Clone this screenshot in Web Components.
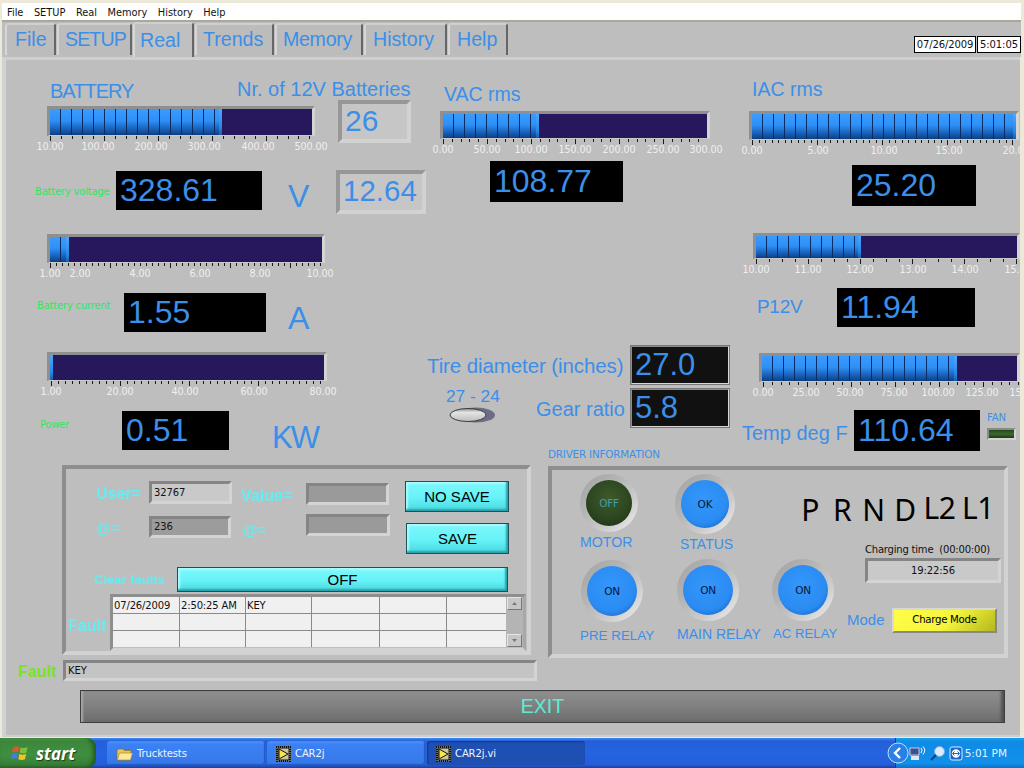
<!DOCTYPE html>
<html><head><meta charset="utf-8">
<style>
html,body{margin:0;padding:0;height:100%;overflow:hidden;background:#ece9d8}
body{font-family:"DejaVu Sans",sans-serif}
</style></head>
<body>
<xp-window>
  <lv-menu><span>File</span><span>SETUP</span><span>Real</span><span>Memory</span><span>History</span><span>Help</span></lv-menu>
  <lv-tabs>
    <lv-tab w="51" pad="8">File</lv-tab><lv-tab w="75" ls="-.9">SETUP</lv-tab><lv-tab w="61" pad="5" active>Real</lv-tab><lv-tab w="79" pad="6">Trends</lv-tab><lv-tab w="88" ls="-.3" pad="6">Memory</lv-tab><lv-tab w="83" pad="7">History</lv-tab><lv-tab w="60" pad="7">Help</lv-tab>
    <lv-clock slot="clock"></lv-clock>
  </lv-tabs>
  <lv-panel>
    <lv-text x="50" y="91" fs="20" ls="-1">BATTERY</lv-text>
    <lv-text x="237" y="89" fs="20">Nr. of 12V Batteries</lv-text>
    <lv-text x="444" y="94" fs="19.5">VAC rms</lv-text>
    <lv-text x="752" y="89" fs="19.5">IAC rms</lv-text>

    <lv-bar x="47" y="106" w="268" h="30" fill="172" seg="11" scale="10.00@50,100.00@98,200.00@151,300.00@204,400.00@258,500.00@311" minor="5"></lv-bar>
    <lv-bar x="440" y="111" w="270" h="28" fill="96" seg="11" scale="0.00@443,50.00@487,100.00@531,150.00@575,200.00@619,250.00@663,300.00@706" minor="5"></lv-bar>
    <lv-bar x="749" y="111" w="270" h="29" fill="264" seg="11" scale="0.00@752,5.00@818,10.00@884,15.00@949,20.00@1016" minor="10" clip="1020"></lv-bar>
    <lv-bar x="47" y="234" w="278" h="29" fill="19" seg="11" scale="1.00@50,2.00@80,4.00@140,6.00@200,8.00@260,10.00@320" minor="10"></lv-bar>
    <lv-bar x="753" y="233" w="267" h="26" fill="105" seg="11" scale="10.00@756,11.00@808,12.00@860,13.00@913,14.00@965,15.00@1018" minor="4" clip="1020"></lv-bar>
    <lv-bar x="47" y="352" w="280" h="29" fill="3" seg="11" scale="1.00@51,20.00@120,40.00@185,60.00@254,80.00@323" minor="10"></lv-bar>
    <lv-bar x="759" y="353" w="261" h="29" fill="195" seg="11" scale="0.00@763,25.00@806,50.00@850,75.00@894,100.00@938,125.00@982,150.00@1026" minor="5" clip="1020"></lv-bar>

    <lv-box x="338" y="100" w="73" h="43" fs="30" tint="#c6c6c6" kind="sunk" color="#3b8fe8">26</lv-box>
    <lv-box x="336" y="170" w="90" h="44" fs="29.5" tint="#c6c6c6" kind="sunk" color="#3b8fe8">12.64</lv-box>

    <lv-box x="116" y="171" w="146" h="39" fs="32" tint="#000" color="#3b8fe8">328.61</lv-box>
    <lv-box x="490" y="161" w="133" h="41" fs="32" tint="#000" color="#3b8fe8">108.77</lv-box>
    <lv-box x="852" y="165" w="124" h="41" fs="32" tint="#000" color="#3b8fe8">25.20</lv-box>
    <lv-box x="124" y="293" w="142" h="39" fs="32" tint="#000" color="#3b8fe8">1.55</lv-box>
    <lv-box x="837" y="288" w="138" h="39" fs="32" tint="#000" color="#3b8fe8">11.94</lv-box>
    <lv-box x="122" y="411" w="107" h="39" fs="32" tint="#000" color="#3b8fe8">0.51</lv-box>
    <lv-box x="854" y="410" w="126" h="41" fs="32" tint="#000" color="#3b8fe8">110.64</lv-box>
    <lv-box x="630" y="345" w="100" h="40" fs="31" tint="#111" kind="thin" color="#3b8fe8">27.0</lv-box>
    <lv-box x="630" y="388" w="100" h="40" fs="31" tint="#111" kind="thin" color="#3b8fe8">5.8</lv-box>

    <lv-text x="35" y="192" fs="10" c="#31e45e" ls="-.2">Battery voltage</lv-text>
    <lv-text x="37" y="306" fs="10" c="#31e45e" ls="-.2">Battery current</lv-text>
    <lv-text x="40" y="425" fs="10" c="#31e45e" ls="-.2">Power</lv-text>
    <lv-text x="288" y="196" fs="32">V</lv-text>
    <lv-text x="288" y="318" fs="32">A</lv-text>
    <lv-text x="272" y="438" fs="31" ls="-2">KW</lv-text>
    <lv-text x="757" y="307" fs="19" ls="-.3">P12V</lv-text>
    <lv-text x="427" y="366" fs="20.5" ls="-.1">Tire diameter (inches)</lv-text>
    <lv-text x="446" y="396" fs="17.3">27 - 24</lv-text>
    <lv-switch x="449" y="407" w="46" h="16"></lv-switch>
    <lv-text x="536" y="409" fs="20">Gear ratio</lv-text>
    <lv-text x="742" y="433" fs="20">Temp deg F</lv-text>
    <lv-text x="987" y="418" fs="10" ls="-.1">FAN</lv-text>
    <lv-fan x="987" y="428" w="29" h="12"></lv-fan>
    <lv-text x="548" y="454" fs="10.4" ls="-.2">DRIVER INFORMATION</lv-text>

    <lv-group x="62" y="465" w="469" h="190"></lv-group>
    <lv-text x="96" y="494" fs="16" c="#62eef2" blur b>User=</lv-text>
    <lv-field x="149" y="481" w="83" h="23" tint="#c9c9c9">32767</lv-field>
    <lv-text x="241" y="496" fs="16" c="#62eef2" blur b>Value=</lv-text>
    <lv-field x="306" y="483" w="83" h="22" tint="#9a9a9a"></lv-field>
    <lv-text x="96" y="528" fs="15" c="#62eef2" blur b>@=</lv-text>
    <lv-field x="149" y="516" w="82" h="22" tint="#9c9c9c">236</lv-field>
    <lv-text x="243" y="530" fs="15" c="#62eef2" blur b>@=</lv-text>
    <lv-field x="306" y="514" w="84" h="22" tint="#9a9a9a"></lv-field>
    <lv-button x="405" y="481" w="104" h="31" fs="15">NO SAVE</lv-button>
    <lv-button x="406" y="523" w="103" h="31" fs="15">SAVE</lv-button>
    <lv-text x="94" y="580" fs="13" c="#62eef2" blur b>Clear faults</lv-text>
    <lv-button x="177" y="567" w="331" h="25" fs="15">OFF</lv-button>
    <lv-text x="68" y="626" fs="16" c="#62eef2" blur b>Fault</lv-text>
    <lv-table x="110" y="594" w="416" h="57"></lv-table>

    <lv-text x="18" y="672" fs="16" c="#77e324" b>Fault</lv-text>
    <lv-field x="63" y="660" w="474" h="21" tint="#c4c4c4">KEY</lv-field>

    <lv-group x="548" y="466" w="460" h="192"></lv-group>
    <lv-led x="609" y="503" r="23" off>OFF</lv-led>
    <lv-led x="705" y="504" r="24">OK</lv-led>
    <lv-led x="612" y="591" r="25">ON</lv-led>
    <lv-led x="708" y="590" r="25">ON</lv-led>
    <lv-led x="803" y="590" r="25">ON</lv-led>
    <lv-text x="580" y="542" fs="14.2">MOTOR</lv-text>
    <lv-text x="680" y="544" fs="14">STATUS</lv-text>
    <lv-text x="580" y="636" fs="13.4">PRE RELAY</lv-text>
    <lv-text x="677" y="634" fs="14">MAIN RELAY</lv-text>
    <lv-text x="773" y="634" fs="13.2">AC RELAY</lv-text>
    <lv-gears x="794" y="490" w="205" h="40"><span>P</span><span>R</span><span>N</span><span>D</span><span class="up">L2</span><span class="up">L1</span></lv-gears>
    <lv-text x="865" y="550" fs="10" c="#111" ls="-.2">Charging time&nbsp;&nbsp;(00:00:00)</lv-text>
    <lv-field x="865" y="558" w="136" h="25" tint="#c9c9c9" center>19:22:56</lv-field>
    <lv-text x="847" y="620" fs="15">Mode</lv-text>
    <lv-button x="892" y="608" w="105" h="25" fs="10.2" yellow>Charge Mode</lv-button>

    <lv-exit x="80" y="690" w="925" h="33">EXIT</lv-exit>
  </lv-panel>
  <xp-taskbar>
    <xp-task icon="folder">Trucktests</xp-task>
    <xp-task icon="vi">CAR2j</xp-task>
    <xp-task icon="vi" active>CAR2j.vi</xp-task>
  </xp-taskbar>
</xp-window>

<script>
const TOP = 57;
const BLUE = '#3b8fe8';
function shadow(el, html){ el.attachShadow({mode:'open'}).innerHTML = html; }

class Placed extends HTMLElement {
  place(){
    const g = n => this.getAttribute(n);
    this.style.position='absolute';
    this.style.left = g('x')+'px';
    this.style.top = (g('y')-TOP)+'px';
    if(g('w')) this.style.width = g('w')+'px';
    if(g('h')) this.style.height = g('h')+'px';
    this.style.boxSizing='border-box';
  }
}

class XpWindow extends HTMLElement { constructor(){super(); shadow(this,`<style>
 :host{display:flex;flex-direction:column;width:1024px;height:768px;overflow:hidden;background:#ece9d8;padding-top:3px;box-sizing:border-box}
 </style><slot></slot>`);} }

class LvMenu extends HTMLElement { constructor(){super(); shadow(this,`<style>
 :host{display:flex;flex:none;height:16px;padding-top:1px;margin:0 3px 0 2px;background:#fff;border-bottom:2px solid #aca899;gap:10.5px;padding-left:5px;align-items:center;
   font:9.8px/17px "DejaVu Sans",sans-serif;color:#111;box-sizing:content-box}
 ::slotted(span){white-space:nowrap}
 </style><slot></slot>`);} }

class LvTabs extends HTMLElement { constructor(){super(); shadow(this,`<style>
 :host{display:flex;flex:none;height:35px;margin:0 3px 0 2px;background:#bebebe;align-items:flex-end;padding-left:3px;gap:1px;position:relative}
 .c{margin-left:auto;align-self:flex-start;margin-top:14px;margin-right:0}
 </style><slot></slot><div class="c"><slot name="clock"></slot></div>`);} }

class LvTab extends HTMLElement { constructor(){super(); const a=this.hasAttribute('active'); shadow(this,`<style>
 :host{display:flex;align-items:center;box-sizing:border-box;flex:none;width:${this.getAttribute('w')}px;padding-left:${this.getAttribute('pad')||6}px;
  height:${a?35:32}px;${a?'':'margin-bottom:2px;'}background:${a?'#c0c0c0':'#bcbcbc'};border-left:2px solid #d6d6d6;border-top:2px solid #cfcfcf;border-right:2px solid #666;border-radius:3px 3px 0 0;
  font:19.6px/1 "Liberation Sans",sans-serif;letter-spacing:${this.getAttribute('ls')||0}px;color:${BLUE};white-space:nowrap}
 </style><slot></slot>`);} }

class LvClock extends HTMLElement { constructor(){super(); shadow(this,`<style>
 :host{display:flex;gap:1px;font:10px/15px "DejaVu Sans",sans-serif;color:#111;letter-spacing:-.1px}
 div{background:#fff;border:1px solid #000;height:15px;text-align:center}
 .a{width:60px}.b{width:42px}
 </style><div class="a">07/26/2009</div><div class="b">5:01:05</div>`);} }

class LvPanel extends HTMLElement { constructor(){super(); shadow(this,`<style>
 :host{display:block;position:relative;flex:none;height:680px;background:#bebebe;overflow:hidden;width:1020px;box-sizing:border-box}
 .edge{position:absolute;inset:0 0 0 2px;border:3px solid #cfcfcf;border-left-width:4px;border-bottom-width:2px;border-right:0;border-left-color:#d2d2d2;pointer-events:none}
 .strip{position:absolute;left:0;top:0;bottom:0;width:2px;background:#ece9d8}
 </style><div class="strip"></div><div class="edge"></div><slot></slot>`);} }

class LvText extends Placed { connectedCallback(){ this.place();
 const g=n=>this.getAttribute(n), fs=+g('fs');
 this.style.fontSize=fs+'px';
 this.style.color=g('c')||BLUE;
 this.style.letterSpacing=(g('ls')||0)+'px';
 if(this.hasAttribute('b')) this.style.fontWeight='bold';
 if(this.hasAttribute('blur')) this.style.filter='blur(.6px)';
 const fam = fs>=13 ? '"Liberation Sans"' : '"DejaVu Sans"';
 if(!this.shadowRoot) shadow(this,`<style>:host{display:block;white-space:nowrap;line-height:0;font-family:${fam},sans-serif}</style><slot></slot>`);
}}

class LvBar extends Placed { connectedCallback(){ this.place();
 const x=+this.getAttribute('x'), w=+this.getAttribute('w'), h=+this.getAttribute('h');
 const fill=+this.getAttribute('fill'), minor=+this.getAttribute('minor');
 const clip=+this.getAttribute('clip')||0;
 const sc=this.getAttribute('scale').split(',').map(s=>{const [t,p]=s.split('@');return {t,p:+p-x-2};});
 const marks=[];
 const ps=sc.map(s=>s.p);
 const step=ps[ps.length-2]-ps[ps.length-3];
 const d=step/minor;
 const start=ps[0];
 const end=Math.min(ps[ps.length-1], w);
 for(let i=0;;i++){const p=start+i*d; if(p>end+.5)break; const maj=i%minor===0; const q=Math.round(p+2)+.5; marks.push(`<line x1="${q}" x2="${q}" y1="0" y2="${maj?5:3}"/>`);}
 const labels=sc.map(s=>`<i style="left:${s.p+2}px">${s.t}</i>`).join('');
 const vis = clip? clip-x : w+40;
 shadow(this,`<style>
  :host{display:block;white-space:nowrap}
  .f{position:absolute;left:0;top:0;right:0;bottom:0;box-sizing:border-box;border:3px solid;border-color:#8f8f8f #d4d4d4 #c9c9c9 #8f8f8f;border-bottom-width:1px;background:#27175c}
  .v{position:absolute;left:0;top:0;bottom:0;width:${fill}px;
    background:
     repeating-linear-gradient(90deg,transparent 0 10px,#0a2a62 10px 11px),
     linear-gradient(180deg,#3a9bff 0,#2e8ff5 45%,#1c6bc8 70%,#0c3f82 100%);
    background-size:100% 100%}
  .v::after{content:"";position:absolute;right:0;top:0;bottom:0;width:${fill>5?3:fill}px;background:linear-gradient(180deg,#4fa6ff,#2a86e4 70%,#1460b0)}
  .clip{position:absolute;top:${h}px;left:-20px;width:${vis+20}px;height:26px;overflow:hidden}
  svg{position:absolute;left:20px;top:0;overflow:visible;stroke:#1a1a1a;stroke-width:1;shape-rendering:crispEdges}
  i{position:absolute;top:5px;font:normal 9.6px/12px "DejaVu Sans",sans-serif;color:#efefef;transform:translateX(calc(-50% + 20px));letter-spacing:-.1px}
  </style>
  <div class="f"><div class="v"></div></div>
  <div class="clip"><svg width="${w}" height="6">${marks.join('')}</svg>${labels}</div>`);
}}

class LvBox extends Placed { connectedCallback(){ this.place();
 const g=n=>this.getAttribute(n), k=g('kind');
 const bd = k==='sunk' ? 'border:4px solid;border-color:#979797 #d2d2d2 #d2d2d2 #979797;' : k==='thin' ? 'border:2px solid;border-color:#8c8c8c #d8d8d8 #d8d8d8 #8c8c8c;outline:1px solid #777;outline-offset:-1px;' : '';
 shadow(this,`<style>
  :host{display:flex;align-items:center;padding-left:${k?3:4}px;padding-bottom:2px;background:${g('tint')};color:${g('color')};${bd}
   font:${g('fs')}px/1 "Liberation Sans",sans-serif;white-space:nowrap}
 </style><slot></slot>`);
}}

class LvField extends Placed { connectedCallback(){ this.place();
 const g=n=>this.getAttribute(n), c=this.hasAttribute('center');
 shadow(this,`<style>
  :host{display:flex;align-items:center;${c?'justify-content:center;':''}padding-left:${c?0:2}px;background:${g('tint')};border:3px solid;border-color:#858585 #d4d4d4 #d4d4d4 #858585;
   font:10px/1 "DejaVu Sans",sans-serif;color:#111;white-space:nowrap;letter-spacing:-.1px}
 </style><slot></slot>`);
}}

class LvButton extends Placed { connectedCallback(){ this.place();
 const g=n=>this.getAttribute(n), y=this.hasAttribute('yellow');
 shadow(this,`<style>
  :host{display:flex;align-items:center;justify-content:center;color:#000;font:${g('fs')}px/1 ${y?'"DejaVu Sans"':'"Liberation Sans"'},sans-serif;
   white-space:nowrap;${y?'letter-spacing:-.3px;':''}
   ${y?'background:linear-gradient(135deg,#ffff4a 0,#f4f43c 55%,#b4b81c 100%);border:2px solid;border-color:#d8d8d8 #888 #888 #d8d8d8;':
   'background:linear-gradient(180deg,#7df7fb 0,#65f3f8 55%,#49d8de 100%);border:1px solid #1f4f57;box-shadow:inset -2px -2px 2px #2aa0a8,inset 2px 2px 2px #a8fbfd;'}
  }
 </style><slot></slot>`);
}}

class LvGroup extends Placed { connectedCallback(){ this.place();
 shadow(this,`<style>:host{display:block;border:4px solid;border-color:#8e8e8e #d2d2d2 #d2d2d2 #8e8e8e;background:#bebebe}</style>`);
}}

class LvTable extends Placed { connectedCallback(){ this.place();
 const first=['07/26/2009','2:50:25 AM','KEY','','',''];
 let cells='';
 for(let r=0;r<3;r++) for(let c=0;c<6;c++) cells+=`<div>${r==0?first[c]:''}</div>`;
 shadow(this,`<style>
  :host{display:flex;border:3px solid;border-color:#8e8e8e #a8a8a8 #d2d2d2 #8e8e8e;background:#bebebe}
  .g{flex:none;display:grid;grid-template-columns:66px 65px 65px 67px 66px 59px;grid-auto-rows:16px;gap:1px;background:#8a8a8a;height:50px;
     font:10px/17px "DejaVu Sans",sans-serif;color:#111;letter-spacing:-.15px}
  .g div{background:#f0f0f0;padding-left:1px;white-space:nowrap;overflow:hidden}
  .sb{flex:1;display:flex;flex-direction:column;justify-content:space-between;background:#b4b4b4;padding:0 1px;height:50px}
  .sb b{display:flex;align-items:center;justify-content:center;height:11px;background:#c6c6c6;border:1px solid;border-color:#e6e6e6 #777 #777 #e6e6e6}
  .sb svg{width:5px;height:3px;fill:#777}
  </style><div class="g">${cells}</div><div class="sb"><b><svg viewBox="0 0 5 3"><path d="M2.5 0 5 3H0z"/></svg></b><b><svg viewBox="0 0 5 3"><path d="M0 0h5L2.5 3z"/></svg></b></div>`);
}}

class LvLed extends Placed { connectedCallback(){
 const g=n=>+this.getAttribute(n), r=g('r'), off=this.hasAttribute('off'), B=6;
 this.place();
 const R=r+B;
 this.style.left=(g('x')-R)+'px'; this.style.top=(g('y')-R-TOP)+'px';
 this.style.width=this.style.height=(2*R)+'px';
 shadow(this,`<style>
  :host{display:flex;align-items:center;justify-content:center;border-radius:50%;background:linear-gradient(135deg,#a2a2a2 0,#b6b6b6 40%,#cecece 70%,#f2f2f2 100%)}
  div{width:${2*r}px;height:${2*r}px;border-radius:50%;display:flex;align-items:center;justify-content:center;
   font:10.5px/1 "DejaVu Sans",sans-serif;letter-spacing:-.2px;
   ${off?'background:radial-gradient(circle at 50% 40%,#3e5a2c 0,#2d4720 55%,#1a2c12 100%);color:#3f9fa8;':
   'background:radial-gradient(circle at 46% 40%,#3596fb 0,#2a8bf2 62%,#1a6ccb 84%,#0e4790 100%);color:#06183a;'}}
 </style><div><slot></slot></div>`);
}}

class LvSwitch extends Placed { connectedCallback(){ this.place();
 shadow(this,`<style>:host{display:block}svg{display:block}</style>
 <svg width="46" height="16" viewBox="0 0 46 16"><defs><linearGradient id="k" x1="0" y1="0" x2="0" y2="1"><stop offset="0" stop-color="#8c8c8c"/><stop offset=".3" stop-color="#e4e4e4"/><stop offset="1" stop-color="#bdbdbd"/></linearGradient></defs>
 <ellipse cx="27" cy="8" rx="19" ry="7.5" fill="#6d6d86"/><ellipse cx="19" cy="8" rx="18" ry="6.5" fill="url(#k)" stroke="#3e3e3e" stroke-width="1"/></svg>`);
}}

class LvFan extends Placed { connectedCallback(){ this.place();
 shadow(this,`<style>:host{display:block;border:2px solid;border-color:#8a8a8a #d4d4d4 #d4d4d4 #8a8a8a;background:linear-gradient(180deg,#22461c,#3e6a2c 50%,#1c3814)}</style>`);
}}

class LvGears extends Placed { connectedCallback(){ this.place();
 shadow(this,`<style>
  :host{display:grid;grid-template-columns:32px 32px 31px 32px 37px 40px;align-items:center;justify-items:center;color:#000;font:30px/40px "Noto Sans",sans-serif;letter-spacing:-.5px}
  ::slotted(.up){position:relative;top:-2px}
 </style><slot></slot>`);
}}

class LvExit extends Placed { connectedCallback(){ this.place();
 shadow(this,`<style>
  :host{display:flex;align-items:center;justify-content:center;border:1px solid #3d3d3d;color:#5cecd6;font:19.5px/1 "Liberation Sans",sans-serif;
  background:linear-gradient(180deg,#8f8f8f 0,#7e7e7e 55%,#6c6c6c 100%);box-shadow:inset 3px 0 2px -1px #a8a8a8,inset -4px 0 3px -1px #505050}
 </style><slot></slot>`);
}}

const FOLDER=`<svg width="17" height="15" viewBox="0 0 17 15"><path d="M1 3.5 2.5 2H7l1.5 1.5H15V13H1z" fill="#e9c45c" stroke="#8c6d1e" stroke-width=".7"/><path d="M1.5 13 3.5 6H16.5L14.5 13z" fill="#ffe89a" stroke="#b08c2c" stroke-width=".7"/></svg>`;
const VI=`<svg width="15" height="16" viewBox="0 0 15 16"><rect width="15" height="16" fill="#111"/><rect x="1" y="1" width="13" height="14" fill="none" stroke="#bbb" stroke-width="1" stroke-dasharray="1 1"/><rect x="2.500" y="2.500" width="10" height="11" fill="#c8c8a0"/><path d="M3 3v10l9-5z" fill="#f4e84a" stroke="#111" stroke-width="1"/></svg>`;

class XpTask extends HTMLElement { constructor(){super(); const a=this.hasAttribute('active'), ic=this.getAttribute('icon');
 shadow(this,`<style>
  :host{display:flex;align-items:center;gap:4px;box-sizing:border-box;flex:none;width:158px;height:24px;margin-right:2px;padding-left:9px;padding-top:2px;border-radius:3px;
   color:#eef4ff;font:10px/1 "DejaVu Sans",sans-serif;letter-spacing:-.1px;white-space:nowrap;
   ${a?'background:#1e50b4;box-shadow:inset 1px 1px 2px #103a8c;':'background:linear-gradient(180deg,#4a8ff5 0,#3c81f3 15%,#3577e8 100%);box-shadow:inset -1px -1px 1px #2458c0;'}}
  svg{flex:none}
 </style>${ic==='folder'?FOLDER:VI}<slot></slot>`);
}}

class XpTaskbar extends HTMLElement { constructor(){super(); shadow(this,`<style>
 :host{display:flex;flex:none;height:30px;width:1024px;margin-top:auto;align-items:center;box-sizing:border-box;
  background:linear-gradient(180deg,#3f8cf3 0,#245edb 10%,#2663e0 50%,#245edb 88%,#1941a5 100%);font-family:"DejaVu Sans",sans-serif}
 .start{flex:none;width:96px;height:30px;display:flex;align-items:center;gap:6px;padding-left:10px;box-sizing:border-box;border-radius:0 9px 9px 0;
  background:linear-gradient(180deg,#5eac56 0,#3c873c 12%,#3f8f3f 55%,#377f37 90%,#2b672b 100%);box-shadow:inset -3px 0 4px #215a21;
  color:#fff;font:italic bold 17px/1 "Open Sans",sans-serif;text-shadow:1px 1px 1px #1a3d1a}
 .tasks{display:flex;margin-left:11px;align-items:center}
 .tray{margin-left:auto;flex:none;width:129px;height:30px;display:flex;align-items:center;box-sizing:border-box;
  background:linear-gradient(180deg,#1aa0f0 0,#0f8be6 12%,#1190ea 85%,#0c6fc8 100%);border-left:1px solid #0a3e9c;position:relative;color:#e6f2ff;font:10px/1 "DejaVu Sans",sans-serif}
 .cv{position:absolute;left:-9px;top:4px;display:block}
 .ic{display:flex;align-items:center;gap:3px}
 .t{margin-left:auto;margin-right:17px;font-size:10.5px;white-space:nowrap;flex:none}
 </style>
 <div class="start"><svg width="20" height="20" viewBox="0 0 20 20"><path d="M3 4.5Q6 2.6 9.3 4L8.2 9.2Q5 8 2 9.6z" fill="#e8532b"/><path d="M10.6 4.4Q14 6 17.6 4L16.4 9.4Q13 11 9.6 9.6z" fill="#7cc043"/><path d="M1.8 10.8Q5 9.4 8 10.6L7 15.8Q4 14.6 .8 16z" fill="#3f7fe0"/><path d="M9.3 11Q13 12.4 16.2 10.8L15 16.2Q11.6 17.8 8.3 16.2z" fill="#f5c422"/></svg><span>start</span></div>
 <div class="tasks"><slot></slot></div>
 <div class="tray">
  <svg class="cv" width="22" height="22" viewBox="0 0 22 22"><circle cx="11" cy="11" r="10" fill="#2a80e6" stroke="#bfe0ff" stroke-width="1"/><path d="M13 6 8 11l5 5" fill="none" stroke="#fff" stroke-width="2.4"/></svg>
  <div class="ic" style="margin-left:13px">
   <svg width="17" height="17" viewBox="0 0 17 17"><rect x="1" y="3" width="9" height="7" fill="#3d4f8c" stroke="#dfe6f5" stroke-width=".8"/><rect x="2" y="11" width="8" height="4" fill="#dfe6f5"/><path d="M12 3q2 2 0 5M14 1.500q3.500 3.500 0 8" fill="none" stroke="#fff" stroke-width="1"/></svg>
   <svg width="17" height="17" viewBox="0 0 17 17"><circle cx="10.500" cy="6.500" r="5" fill="#dcecff" stroke="#7aa8dc"/><path d="M7 10 2 15" stroke="#1c3a80" stroke-width="2.200"/></svg>
   <svg width="14" height="17" viewBox="0 0 14 17"><rect x="1" y="2" width="12" height="13" rx="2" fill="#1866cc" stroke="#dcecff"/><circle cx="7" cy="8.500" r="4.200" fill="#fff"/><path d="M3.800 8.500h6.400M8.500 6.500l2 2-2 2M5.500 6.500l-2 2 2 2" stroke="#1866cc" fill="none"/></svg>
  </div>
  <span class="t">5:01 PM</span>
 </div>`);} }

customElements.define('xp-window',XpWindow);
customElements.define('lv-menu',LvMenu);
customElements.define('lv-tabs',LvTabs);
customElements.define('lv-tab',LvTab);
customElements.define('lv-clock',LvClock);
customElements.define('lv-panel',LvPanel);
customElements.define('lv-text',LvText);
customElements.define('lv-bar',LvBar);
customElements.define('lv-box',LvBox);
customElements.define('lv-field',LvField);
customElements.define('lv-button',LvButton);
customElements.define('lv-group',LvGroup);
customElements.define('lv-table',LvTable);
customElements.define('lv-led',LvLed);
customElements.define('lv-switch',LvSwitch);
customElements.define('lv-fan',LvFan);
customElements.define('lv-gears',LvGears);
customElements.define('lv-exit',LvExit);
customElements.define('xp-task',XpTask);
customElements.define('xp-taskbar',XpTaskbar);
</script>
</body></html>
